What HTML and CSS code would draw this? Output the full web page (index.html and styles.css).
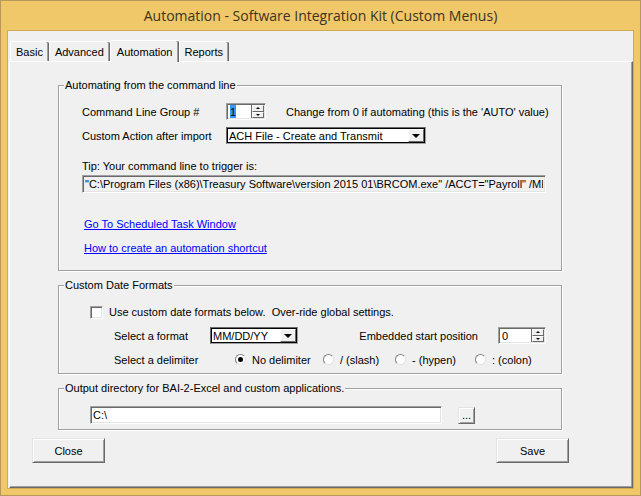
FILE: index.html
```html
<!DOCTYPE html>
<html lang="en">

<head>
    <meta charset="UTF-8">
    <meta name="viewport" content="width=device-width, initial-scale=1.0">
    <title>Automation - Software Integration Kit (Custom Menus)</title>

    <link rel="stylesheet" href="styles.css">
</head>

<body>
    <div class="window">
        <h1 class="titlebar">Automation - Software Integration Kit (Custom Menus)</h1>
        <div class="client">
            <div class="tabs" role="tablist">
                <button type="button" class="tab" role="tab">Basic</button>
                <button type="button" class="tab" role="tab">Advanced</button>
                <button type="button" class="tab active" role="tab" aria-selected="true">Automation</button>
                <button type="button" class="tab" role="tab">Reports</button>
            </div>

            <form class="panel">
                <fieldset class="group command">
                    <legend>Automating from the command line</legend>
                    <div class="row">
                        <label class="caption" for="group_no">Command Line Group #</label>
                        <div class="spinner">
                            <input id="group_no" type="text" value="1">
                            <div class="spin-btns">
                                <button type="button" class="up" aria-label="Up"></button>
                                <button type="button" class="down" aria-label="Down"></button>
                            </div>
                        </div>
                        <span class="hint">Change from 0 if automating (this is the 'AUTO' value)</span>
                    </div>
                    <div class="row">
                        <label class="caption" for="action">Custom Action after import</label>
                        <div class="combo combo-wide">
                            <select id="action">
                                <option>ACH File - Create and Transmit</option>
                            </select>
                            <span class="drop"></span>
                        </div>
                    </div>
                    <div class="tip">
                        <label for="cmd">Tip: Your command line to trigger is:</label>
                        <input id="cmd" class="textbox readonly" type="text" readonly
                            value="&quot;C:\Program Files (x86)\Treasury Software\version 2015 01\BRCOM.exe&quot; /ACCT=&quot;Payroll&quot; /MENU">
                    </div>
                    <div class="links">
                        <a href="#">Go To Scheduled Task Window</a>
                        <a href="#">How to create an automation shortcut</a>
                    </div>
                </fieldset>

                <fieldset class="group dates">
                    <legend>Custom Date Formats</legend>
                    <label class="check">
                        <input type="checkbox">
                        <span>Use custom date formats below.&nbsp; Over-ride global settings.</span>
                    </label>
                    <div class="row indent">
                        <label class="caption" for="format">Select a format</label>
                        <div class="combo">
                            <select id="format">
                                <option>MM/DD/YY</option>
                            </select>
                            <span class="drop"></span>
                        </div>
                        <label class="position" for="start_pos">Embedded start position</label>
                        <div class="spinner spinner-wide">
                            <input id="start_pos" type="text" value="0">
                            <div class="spin-btns">
                                <button type="button" class="up" aria-label="Up"></button>
                                <button type="button" class="down" aria-label="Down"></button>
                            </div>
                        </div>
                    </div>
                    <div class="row indent">
                        <span class="caption">Select a delimiter</span>
                        <div class="radios">
                            <label><input type="radio" name="delimiter" checked>No delimiter</label>
                            <label><input type="radio" name="delimiter">/ (slash)</label>
                            <label><input type="radio" name="delimiter">- (hypen)</label>
                            <label><input type="radio" name="delimiter">: (colon)</label>
                        </div>
                    </div>
                </fieldset>

                <fieldset class="group output">
                    <legend>Output directory for BAI-2-Excel and custom applications.</legend>
                    <div class="row">
                        <input class="textbox" type="text" value="C:\" aria-label="Output directory">
                        <button type="button" class="btn browse">...</button>
                    </div>
                </fieldset>

                <div class="actions">
                    <button type="button" class="btn">Close</button>
                    <button type="button" class="btn">Save</button>
                </div>
            </form>
        </div>
    </div>

    <script>
        // the first field starts with its value selected
        var groupNo = document.querySelector('#group_no');
        groupNo.focus();
        groupNo.select();

        // up / down arrows
        document.querySelectorAll('.spinner').forEach(function (spinner) {
            var input = spinner.querySelector('input');
            spinner.querySelector('.up').onclick = function () {
                input.value = Number(input.value) + 1;
            };
            spinner.querySelector('.down').onclick = function () {
                input.value = Math.max(0, Number(input.value) - 1);
            };
        });
    </script>
</body>

</html>
```
FILE: styles.css
```css
* {
    box-sizing: border-box;
}

body {
    margin: 0;
    font-family: "Liberation Sans", Arial, sans-serif;
    font-size: 11px;
    line-height: 14px;
    color: #000;
}

button,
input,
select {
    margin: 0;
    padding: 0;
    border: 0;
    border-radius: 0;
    font: inherit;
    color: inherit;
    outline: none;
    appearance: none;
}

.window {
    min-height: 100vh;
    display: flex;
    flex-direction: column;
    padding: 0 6px 6px;
    border: 1px solid #b7985a;
    background-color: #f0c869;
}

.titlebar {
    margin: 0;
    font-family: "Open Sans", "Noto Sans", sans-serif;
    font-size: 14px;
    font-weight: 400;
    line-height: 29px;
    text-align: center;
    color: #3c3323;
}

.client {
    flex: 1;
    display: flex;
    flex-direction: column;
    border: 1px solid #d0ab55;
    background-color: #f0f0f0;
}

/* tabs */
.tabs {
    display: flex;
    align-items: flex-end;
    height: 30px;
    padding-left: 2px;
}

.tab {
    height: 20px;
    padding: 0 6px 0 5px;
    border: solid #fff;
    border-width: 1px 0 0 1px;
    border-radius: 2px 2px 0 0;
    background-color: #f0f0f0;
    box-shadow: inset -1px 0 #696969, inset -2px 0 #a0a0a0;
}

.tab.active {
    height: 22px;
    margin-bottom: -1px;
    padding: 0 6px;
    z-index: 1;
}

.panel {
    flex: 1;
    margin-left: 1px;
    padding: 16px 70px 0 48px;
    border: 1px solid;
    border-color: #fff #696969 #696969 #fff;
    box-shadow: inset -1px -1px #a0a0a0;
}

/* group boxes */
.group {
    min-width: 0;
    margin: 0 0 7px;
    padding: 0 15px 0 23px;
    border: 1px solid #a0a0a0;
    box-shadow: 1px 1px #fff, inset 1px 1px #fff;
}

.group legend {
    margin-left: -18px;
    padding: 0 1px;
    background-color: #f0f0f0;
}

.row {
    display: flex;
    align-items: center;
    height: 17px;
    white-space: nowrap;
}

.command {
    padding-top: 11px;
    padding-bottom: 15px;
}

.command .row {
    margin-bottom: 7px;
}

.command .caption {
    flex-shrink: 0;
    width: 144px;
}

.hint {
    margin-left: 20px;
}

.tip {
    display: grid;
    gap: 2px;
    margin-top: 15px;
}

.links {
    display: grid;
    justify-items: start;
    gap: 10px;
    margin: 24px 0 0 2px;
}

a {
    color: #0000ff;
}

/* sunken fields */
.spinner,
.textbox {
    border: 1px solid;
    border-color: #a0a0a0 #fff #fff #a0a0a0;
    background-color: #fff;
    box-shadow: inset 1px 1px #696969, inset -1px -1px #e3e3e3;
}

.textbox {
    flex: 1;
    width: 100%;
    height: 18px;
    padding: 0 2px;
}

.readonly {
    background-color: #f0f0f0;
}

.spinner {
    display: flex;
    flex-shrink: 0;
    width: 40px;
    height: 17px;
    padding: 1px;
}

.spinner input {
    flex: 1;
    width: 0;
    padding-left: 2px;
    background: none;
}

.spinner-wide {
    width: 48px;
}

::selection {
    color: #000;
    background-color: #3399ff;
}

.spin-btns {
    display: grid;
    grid-template-rows: 1fr 1fr;
    width: 13px;
    border-left: 1px solid #696969;
}

.spin-btns button {
    display: grid;
    place-items: center;
    border: 1px solid;
    border-color: #fff #696969 #696969 #fff;
    background-color: #f0f0f0;
}

.spin-btns button::before {
    content: "";
    border: solid transparent;
    border-width: 0 2px;
}

.spin-btns .up::before {
    border-bottom: 2px solid #000;
}

.spin-btns .down::before {
    border-top: 2px solid #000;
}

.combo {
    display: grid;
    width: 88px;
    height: 17px;
    border: 1px solid;
    border-color: #696969 #a0a0a0 #a0a0a0 #696969;
    background-color: #fff;
}

.combo-wide {
    width: 200px;
}

.combo select,
.drop {
    grid-area: 1 / 1;
}

.combo select {
    height: 15px;
    padding-left: 1px;
    border: 1px solid #000;
    background: none;
}

.drop {
    justify-self: end;
    display: grid;
    place-items: center;
    width: 16px;
    height: 13px;
    margin: 1px;
    border: 1px solid;
    border-color: #fff #696969 #696969 #fff;
    background-color: #f0f0f0;
    pointer-events: none;
}

.drop::before {
    content: "";
    border: solid transparent;
    border-width: 4px 4px 0;
    border-top-color: #000;
}

/* date formats */
.dates {
    padding-top: 12px;
    padding-bottom: 5px;
}

.check {
    display: flex;
    align-items: center;
    gap: 6px;
    height: 16px;
    margin-left: 8px;
}

.check input {
    width: 13px;
    height: 13px;
    border: 1px solid;
    border-color: #a0a0a0 #fff #fff #a0a0a0;
    background-color: #fff;
    box-shadow: inset 1px 1px #696969, inset -1px -1px #e3e3e3;
}

.check input:checked {
    background-color: #696969;
}

.indent {
    margin: 7px 0 0 32px;
}

.indent .caption {
    width: 96px;
}

.position {
    margin-left: auto;
}

.position + .spinner {
    margin-left: 20px;
}

.radios {
    flex: 1;
    display: grid;
    grid-template-columns: 88px 72px 80px 1fr;
    margin-left: 25px;
}

.radios label {
    display: flex;
    align-items: center;
    gap: 6px;
}

.radios input {
    display: grid;
    place-items: center;
    width: 11px;
    height: 11px;
    border: 1px solid;
    border-color: #808080 #e3e3e3 #e3e3e3 #808080;
    border-radius: 50%;
    background-color: #fff;
}

.radios input:checked::before {
    content: "";
    width: 5px;
    height: 5px;
    border-radius: 50%;
    background-color: #000;
}

/* output directory and buttons */
.output {
    padding-top: 11px;
    padding-bottom: 5px;
    margin-bottom: 8px;
}

.output .row {
    height: 18px;
    gap: 16px;
    margin: 0 71px 0 8px;
}

.btn {
    width: 73px;
    height: 25px;
    border: 1px solid;
    border-color: #e3e3e3 #696969 #696969 #e3e3e3;
    background-color: #f0f0f0;
    box-shadow: inset 1px 1px #fff, inset -1px -1px #a0a0a0;
}

.btn:active {
    border-color: #696969 #e3e3e3 #e3e3e3 #696969;
}

.browse {
    width: 17px;
    height: 17px;
}

.actions {
    display: flex;
    justify-content: space-between;
    margin: 0 -7px 0 -26px;
}
```
